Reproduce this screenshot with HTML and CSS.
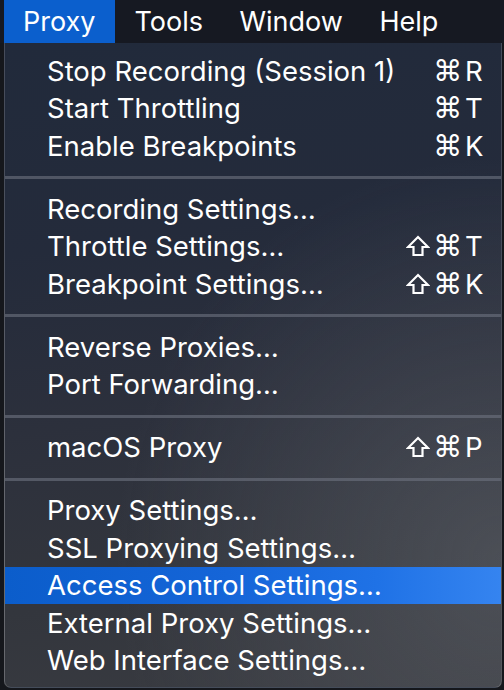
FILE: index.html
```html
<!DOCTYPE html>
<html lang="en">
<head>
<meta charset="utf-8">
<title>Proxy menu</title>
<link rel="stylesheet" href="styles.css">
</head>
<body>
<div class="menubar">
  <div class="menu-title active">Proxy</div>
  <div class="menu-title">Tools</div>
  <div class="menu-title">Window</div>
  <div class="menu-title">Help</div>
</div>
<div class="panel">
  <div class="item"><span>Stop Recording (Session 1)</span><span class="sc"><span class="sym">⌘</span><span class="key">R</span></span></div>
  <div class="item"><span>Start Throttling</span><span class="sc"><span class="sym">⌘</span><span class="key">T</span></span></div>
  <div class="item"><span>Enable Breakpoints</span><span class="sc"><span class="sym">⌘</span><span class="key">K</span></span></div>
  <div class="sep"></div>
  <div class="item"><span>Recording Settings…</span></div>
  <div class="item"><span>Throttle Settings…</span><span class="sc"><svg class="shift" viewBox="0 0 24 22" width="24" height="22"><path d="M12 2 L22 12 H16.5 V20 H7.5 V12 H2 Z"/></svg><span class="sym">⌘</span><span class="key">T</span></span></div>
  <div class="item"><span>Breakpoint Settings…</span><span class="sc"><svg class="shift" viewBox="0 0 24 22" width="24" height="22"><path d="M12 2 L22 12 H16.5 V20 H7.5 V12 H2 Z"/></svg><span class="sym">⌘</span><span class="key">K</span></span></div>
  <div class="sep"></div>
  <div class="item"><span>Reverse Proxies…</span></div>
  <div class="item"><span>Port Forwarding…</span></div>
  <div class="sep"></div>
  <div class="item"><span>macOS Proxy</span><span class="sc"><svg class="shift" viewBox="0 0 24 22" width="24" height="22"><path d="M12 2 L22 12 H16.5 V20 H7.5 V12 H2 Z"/></svg><span class="sym">⌘</span><span class="key">P</span></span></div>
  <div class="sep"></div>
  <div class="item"><span>Proxy Settings…</span></div>
  <div class="item"><span>SSL Proxying Settings…</span></div>
  <div class="item selected"><span>Access Control Settings…</span></div>
  <div class="item"><span>External Proxy Settings…</span></div>
  <div class="item"><span>Web Interface Settings…</span></div>
</div>
</body>
</html>
```
FILE: styles.css
```css
html, body {
  margin: 0;
  padding: 0;
}
body {
  background: #15171c;
  font-family: Inter, "Noto Sans", "Liberation Sans", sans-serif;
  color: #ffffff;
  width: 504px;
  height: 690px;
  overflow: hidden;
}
.menubar {
  display: flex;
  height: 43px;
  padding-left: 4px;
  background: #161922;
}
.menu-title {
  padding: 0 17.5px 0 19px;
  font-size: 27px;
  line-height: 43px;
  color: #ffffff;
}
.menu-title.active {
  background: #0b5fcd;
  padding-right: 20px;
}
.panel {
  margin-left: 4px;
  width: 496px;
  padding: 9px 0 8px;
  border: 1px solid rgba(255, 255, 255, 0.16);
  border-top: none;
  border-radius: 0 0 7px 7px;
  background:
    radial-gradient(ellipse at 100% 80%, rgba(120, 124, 132, 0.35), rgba(120, 124, 132, 0) 55%),
    linear-gradient(172deg, #212a3b 0%, #242b3b 30%, #2c303c 55%, #33363d 80%, #393b41 100%);
}
.item {
  display: flex;
  justify-content: space-between;
  align-items: center;
  height: 37.5px;
  padding: 0 18px 0 42px;
  font-size: 27.5px;
  white-space: nowrap;
}
.item.selected {
  background: linear-gradient(90deg, #0b5dcb 0%, #1565d8 45%, #1f72e6 75%, #3584f0 100%);
}
.sc {
  display: flex;
  align-items: center;
}
.shift {
  margin-right: 3px;
  fill: none;
  stroke: #ffffff;
  stroke-width: 2.2;
  stroke-linejoin: miter;
}
.sym {
  font-family: "DejaVu Sans", sans-serif;
  font-size: 29px;
  margin-right: 3px;
}
.key {
  width: 18px;
  text-align: left;
}
.sep {
  height: 3px;
  margin: 11.5px 0 11px;
  background: rgba(110, 115, 128, 0.6);
}
```
